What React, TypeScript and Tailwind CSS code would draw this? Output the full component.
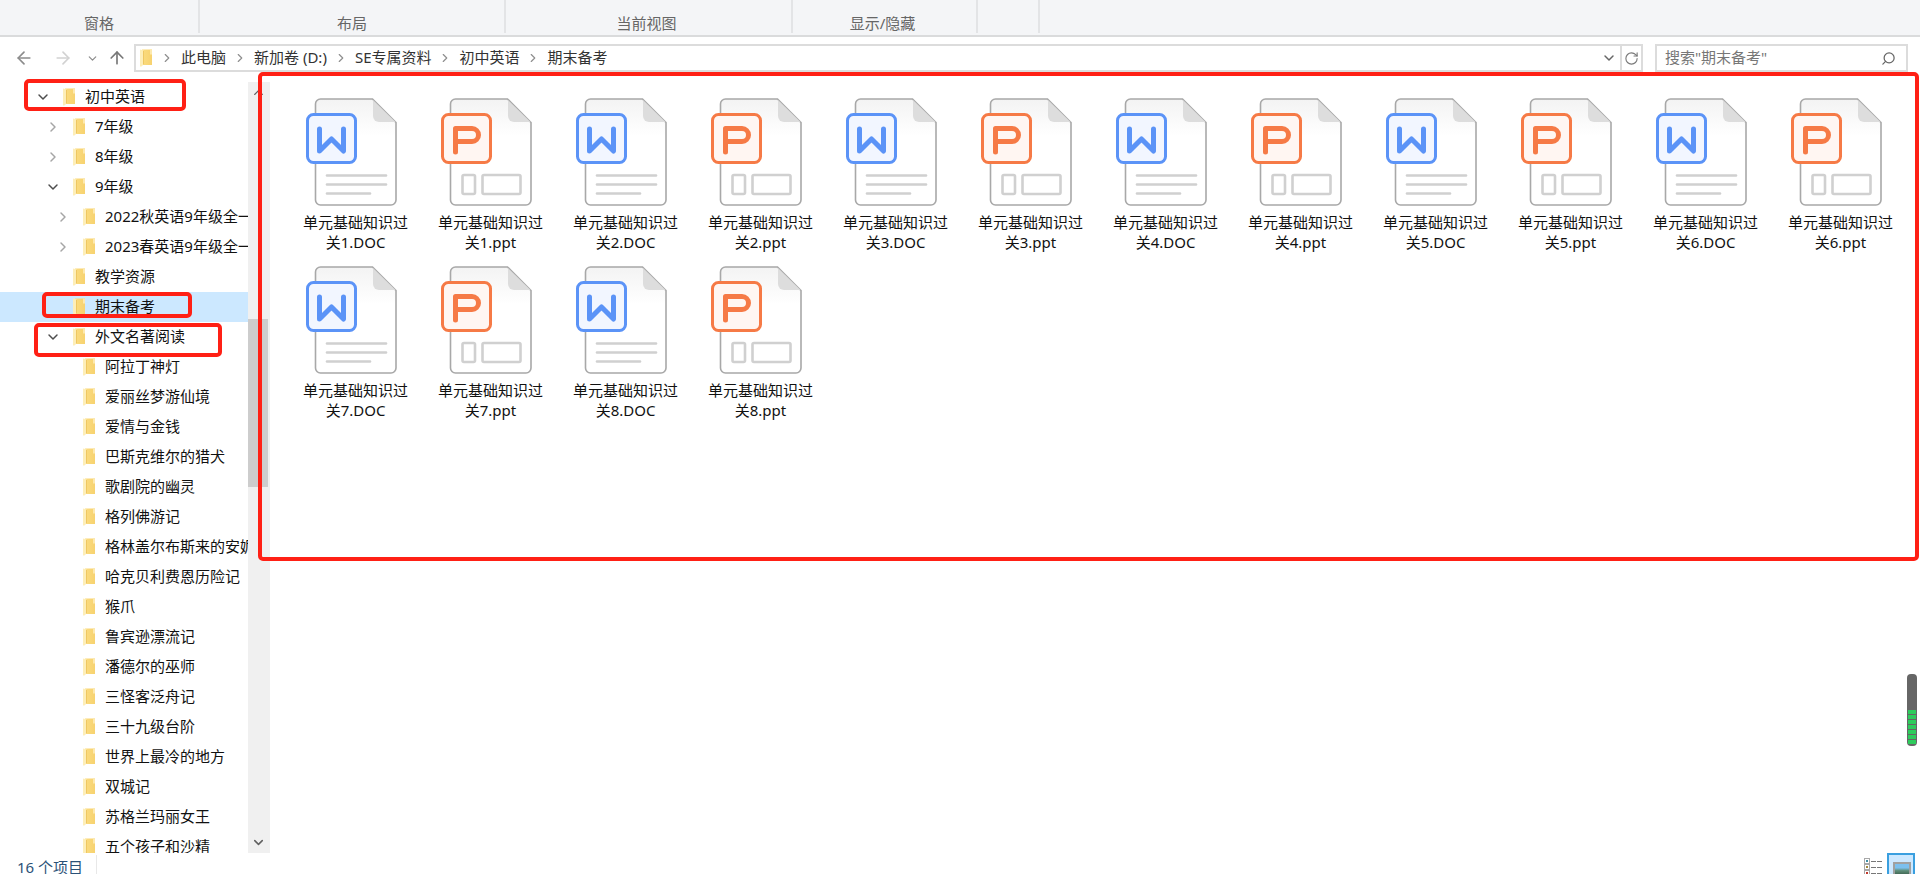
import { ArrowLeft, ArrowRight, ArrowUp, ChevronDown, ChevronRight, ChevronUp, RotateCw, Search } from 'lucide-react';

type TreeRow = {
  name: string;
  level: 0 | 1 | 2;
  state?: 'open' | 'closed';
  selected?: boolean;
};

const ribbonGroups = [
  { label: '窗格', width: 'w-[200px]', inset: '' },
  { label: '布局', width: 'w-[306px]', inset: '' },
  { label: '当前视图', width: 'w-[287px]', inset: 'pr-[4px]' },
  { label: '显示/隐藏', width: 'w-[185px]', inset: 'pr-[4px]' },
  { label: '', width: 'w-[62px]', inset: '' },
];

const crumbs = ['此电脑', '新加卷 (D:)', 'SE专属资料', '初中英语', '期末备考'];

const treeRows: TreeRow[] = [
  { name: '初中英语', level: 0, state: 'open' },
  { name: '7年级', level: 1, state: 'closed' },
  { name: '8年级', level: 1, state: 'closed' },
  { name: '9年级', level: 1, state: 'open' },
  { name: '2022秋英语9年级全一册', level: 2, state: 'closed' },
  { name: '2023春英语9年级全一册', level: 2, state: 'closed' },
  { name: '教学资源', level: 1 },
  { name: '期末备考', level: 1, selected: true },
  { name: '外文名著阅读', level: 1, state: 'open' },
  { name: '阿拉丁神灯', level: 2 },
  { name: '爱丽丝梦游仙境', level: 2 },
  { name: '爱情与金钱', level: 2 },
  { name: '巴斯克维尔的猎犬', level: 2 },
  { name: '歌剧院的幽灵', level: 2 },
  { name: '格列佛游记', level: 2 },
  { name: '格林盖尔布斯来的安妮', level: 2 },
  { name: '哈克贝利费恩历险记', level: 2 },
  { name: '猴爪', level: 2 },
  { name: '鲁宾逊漂流记', level: 2 },
  { name: '潘德尔的巫师', level: 2 },
  { name: '三怪客泛舟记', level: 2 },
  { name: '三十九级台阶', level: 2 },
  { name: '世界上最冷的地方', level: 2 },
  { name: '双城记', level: 2 },
  { name: '苏格兰玛丽女王', level: 2 },
  { name: '五个孩子和沙精', level: 2 },
];

const levelPadding = { 0: 'pl-[35px]', 1: 'pl-[45px]', 2: 'pl-[55px]' };

const files = [1, 2, 3, 4, 5, 6, 7, 8].flatMap((n) => [
  { kind: 'word' as const, name: `单元基础知识过关${n}.DOC` },
  { kind: 'ppt' as const, name: `单元基础知识过关${n}.ppt` },
]);

function FolderIcon({ className }: Readonly<{ className?: string }>) {
  return (
    <svg viewBox="0 0 12 18" className={`h-[18px] w-[12px] shrink-0 ${className ?? ''}`}>
      <defs>
        <linearGradient id="folderBack" x1="0" y1="0" x2="1" y2="0">
          <stop offset="0" stopColor="#fbdc7f" />
          <stop offset="1" stopColor="#f7d26f" />
        </linearGradient>
      </defs>
      <rect x="2" y="0.5" width="10" height="15.5" fill="url(#folderBack)" />
      <rect x="10" y="0.5" width="2" height="5" fill="#fde9ae" />
      <path d="M0 0.5 L4 1.5 V15 L1.5 17.5 H0 Z" fill="#fdeeb9" />
      <path d="M4 1.5 V15 L3 16 V2 Z" fill="#eec763" />
    </svg>
  );
}

function FileIcon({ kind }: Readonly<{ kind: 'word' | 'ppt' }>) {
  const isWord = kind === 'word';
  return (
    <svg viewBox="0 0 100 108" className="h-[108px] w-[100px]">
      <defs>
        <linearGradient id="sheet" x1="0" y1="0" x2="0" y2="1">
          <stop offset="0" stopColor="#f3f3f3" />
          <stop offset="0.35" stopColor="#ffffff" />
        </linearGradient>
      </defs>
      <path d="M14.5 1 H66.5 L90 24.5 V102 a5 5 0 0 1 -5 5 H14.5 a5 5 0 0 1 -5 -5 V6 a5 5 0 0 1 5 -5 Z" fill="url(#sheet)" stroke="#a8a8a8" strokeWidth="1.6" />
      <path d="M67 2 L89.5 24 H73 a6 6 0 0 1 -6 -6 Z" fill="#dddddd" />
      {isWord ? (
        <g stroke="#d0d0d0" strokeWidth="2.6" strokeLinecap="round">
          <path d="M21 77.5 H80" />
          <path d="M21 86.5 H80" />
          <path d="M21 95.5 H64" />
        </g>
      ) : (
        <g stroke="#d0d0d0" strokeWidth="2.6" fill="none">
          <rect x="21.5" y="77" width="12.5" height="19" rx="1.5" />
          <rect x="41.5" y="77" width="38" height="19" rx="1.5" />
        </g>
      )}
      <rect
        x="1.5"
        y="16.5"
        width="48"
        height="48"
        rx="6"
        fill={isWord ? '#f2f6ff' : '#fff6f2'}
        stroke={isWord ? '#5b93f7' : '#f67a46'}
        strokeWidth="3"
      />
      {isWord ? (
        <path d="M13.5 31 V53 L25.5 41 L37.5 53 V31" fill="none" stroke="#5b93f7" strokeWidth="5" strokeLinecap="round" strokeLinejoin="round" />
      ) : (
        <path d="M14.5 54 V30.5 H31 a6.5 6.5 0 0 1 0 13 H14.5" fill="none" stroke="#f67a46" strokeWidth="5" strokeLinecap="round" strokeLinejoin="round" />
      )}
    </svg>
  );
}

function TreeItem({ row }: Readonly<{ row: TreeRow }>) {
  return (
    <div className={`flex h-[30px] items-center whitespace-nowrap ${levelPadding[row.level]} ${row.selected ? 'bg-[#cce8ff]' : ''}`}>
      <span className="flex w-4 shrink-0 justify-center">
        {row.state === 'open' ? <ChevronDown size={16} strokeWidth={2.2} className="text-[#4d4d4d]" /> : null}
        {row.state === 'closed' ? <ChevronRight size={16} strokeWidth={2.2} className="text-[#a6a6a6]" /> : null}
      </span>
      <FolderIcon className="ml-3" />
      <span className="ml-[10px] pb-[2px]">{row.name}</span>
    </div>
  );
}

export default function App() {
  return (
    <div className="relative flex h-[874px] w-[1920px] flex-col overflow-hidden bg-white font-['Noto_Sans','Noto_Sans_CJK_SC',sans-serif] text-[15px] leading-5 text-[#1a1a1a]">
      <div className="flex h-[37px] shrink-0 border-b-2 border-[#dadbdc] bg-[#f4f5f7] text-[#666666]">
        {ribbonGroups.map((group) => (
          <div key={group.width} className={`${group.width} ${group.inset} h-[33px] border-r-2 border-[#e3e4e6] pt-[13px] text-center`}>
            {group.label}
          </div>
        ))}
      </div>

      <div className="flex h-[45px] shrink-0 items-start pt-[7px]">
        <div className="flex h-7 w-[134px] shrink-0 items-center text-[#8c8c8c]">
          <ArrowLeft size={20} strokeWidth={2} className="ml-[14px]" />
          <ArrowRight size={20} strokeWidth={2} className="ml-[19px] text-[#d2d2d2]" />
          <ChevronDown size={13} strokeWidth={2.2} className="ml-[13px]" />
          <ArrowUp size={20} strokeWidth={2} className="ml-2 text-[#777777]" />
        </div>
        <div className="flex h-7 w-[1509px] items-center border-2 border-[#dcdcdc]">
          <FolderIcon className="ml-1" />
          <div className="ml-2 flex items-center gap-[7px]">
            {crumbs.map((crumb) => (
              <div key={crumb} className="flex items-center gap-[7px]">
                <ChevronRight size={14} strokeWidth={2} className="text-[#8f8f8f]" />
                <span className="pb-[2px] text-[#333333]">{crumb}</span>
              </div>
            ))}
          </div>
          <ChevronDown size={16} strokeWidth={2.2} className="ml-auto mr-[3px] text-[#666666]" />
          <div className="flex h-full w-[21px] items-center justify-center border-l-2 border-[#dcdcdc]">
            <RotateCw size={15} strokeWidth={1.8} className="text-[#7a7a7a]" />
          </div>
        </div>
        <div className="ml-3 flex h-7 w-[253px] items-center border-2 border-[#dcdcdc] pl-2 pr-[10px] text-[#777777]">
          <span className="pb-[2px]">搜索"期末备考"</span>
          <Search size={15} strokeWidth={2} className="ml-auto -scale-x-100 text-[#666666]" />
        </div>
      </div>

      <div className="flex min-h-0 flex-1">
        <div className="w-[248px] shrink-0 overflow-hidden text-[#111111]">
          {treeRows.map((row) => (
            <TreeItem key={row.name} row={row} />
          ))}
        </div>
        <div className="flex w-5 shrink-0 flex-col items-center bg-[#f0f0f0] pt-[3px]">
          <ChevronUp size={15} strokeWidth={2.2} className="text-[#606060]" />
          <div className="mt-[219px] h-[168px] w-full bg-[#cdcdcd]" />
          <ChevronDown size={15} strokeWidth={2.4} className="mt-auto mb-[3px] text-[#606060]" />
        </div>
        <div className="flex-1 border-l-2 border-[#f0f0f0] pl-[18px] pt-4">
          <div className="grid grid-cols-[repeat(12,135px)] auto-rows-[168px]">
            {files.map((file) => (
              <div key={file.name} className="flex flex-col items-center">
                <FileIcon kind={file.kind} />
                <div className="mt-[6px] w-[112px] break-all text-center text-[#111111]">{file.name}</div>
              </div>
            ))}
          </div>
        </div>
      </div>

      <div className="flex h-[21px] shrink-0 items-start overflow-hidden">
        <div className="mt-[2px] h-[19px] w-[97px] border-r border-[#e8e8e8] pl-[17px] pt-[2px] text-[#2b5278]">16 个项目</div>
        <div className="ml-auto flex items-start">
          <div className="mt-[5px] flex flex-col">
            {['#3f8fa6', '#a28a3d', '#c0392b'].map((color) => (
              <div key={color} className="flex items-center gap-px">
                <span className="flex h-[6px] w-[6px] items-center justify-center border border-[#a8a8a8]">
                  <span className="h-[2px] w-[2px]" style={{ backgroundColor: color }} />
                </span>
                <span className="h-px w-[5px] bg-[#777777]" />
                <span className="h-px w-[5px] bg-[#777777]" />
              </div>
            ))}
          </div>
          <div className="ml-[5px] mr-[5px] h-[28px] w-[28px] border-2 border-[#3a9fdf] bg-[#cce8ff] pl-[4px] pt-[7px]">
            <div className="h-[15px] w-[18px] border-2 border-[#a0a0a0] bg-[linear-gradient(#7cc0ee_35%,#5f8f7a_60%,#3c5f4c)]" />
          </div>
        </div>
      </div>

      <div className="absolute left-[24px] top-[79px] h-[32px] w-[162px] rounded-[5px] border-4 border-[#ff2015]" />
      <div className="absolute left-[42px] top-[292px] h-[26px] w-[150px] rounded-[5px] border-4 border-[#ff2015]" />
      <div className="absolute left-[34px] top-[323px] h-[34px] w-[188px] rounded-[5px] border-4 border-[#ff2015]" />
      <div className="absolute left-[258px] top-[72px] h-[489px] w-[1661px] rounded-[5px] border-4 border-[#ff2015]" />

      <div className="absolute left-[1907px] top-[674px] flex h-[72px] w-[10px] flex-col justify-end gap-px rounded-[4px] bg-[#666666] px-px pb-[2px]">
        {[1, 2, 3, 4, 5, 6, 7].map((bar) => (
          <span key={bar} className="h-[4px] bg-[#2ecc5c]" />
        ))}
      </div>
    </div>
  );
}
